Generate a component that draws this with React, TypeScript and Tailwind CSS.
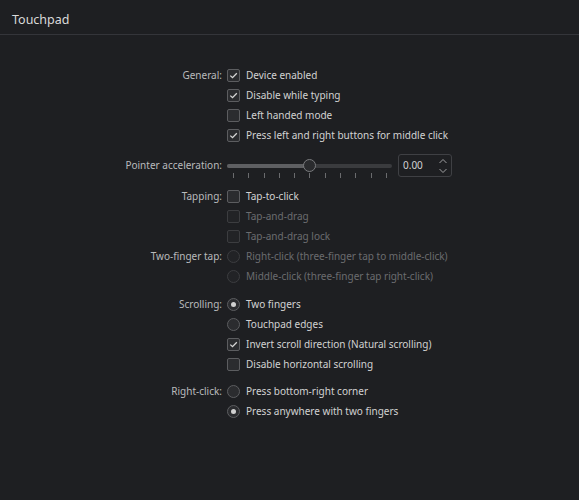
import type { ReactNode } from "react";

function Check({ checked, disabled }: { checked?: boolean; disabled?: boolean }) {
  return (
    <span
      className={`flex h-[13px] w-[13px] shrink-0 items-center justify-center rounded-[2px] border ${
        disabled ? "border-[#3c3d40] bg-[#222326]" : "border-[#5c5d60] bg-[#2b2c2f]"
      }`}
    >
      {checked && (
        <svg width="9" height="9" viewBox="0 0 9 9" fill="none" aria-hidden>
          <path d="M1.3 4.6 L3.5 6.7 L7.8 2.2" stroke="#d6d6d6" strokeWidth="1.3" />
        </svg>
      )}
    </span>
  );
}

function Radio({ checked, disabled }: { checked?: boolean; disabled?: boolean }) {
  return (
    <span
      className={`flex h-[13px] w-[13px] shrink-0 items-center justify-center rounded-full border ${
        disabled ? "border-[#3c3d40] bg-[#222326]" : "border-[#5c5d60] bg-[#2b2c2f]"
      }`}
    >
      {checked && <span className="h-[5px] w-[5px] rounded-full bg-[#d0d0d0]" />}
    </span>
  );
}

function Option({
  kind,
  checked,
  disabled,
  children,
}: {
  kind: "check" | "radio";
  checked?: boolean;
  disabled?: boolean;
  children: ReactNode;
}) {
  return (
    <div className="flex h-[20px] items-center gap-[6px]">
      {kind === "check" ? <Check checked={checked} disabled={disabled} /> : <Radio checked={checked} disabled={disabled} />}
      <span className={disabled ? "text-[#6b6c6f]" : "text-[#d2d2d2]"}>{children}</span>
    </div>
  );
}

function Row({ label, children, className = "" }: { label?: string; children: ReactNode; className?: string }) {
  return (
    <div className={`grid grid-cols-[222px_1fr] gap-x-[5px] ${className}`}>
      <div className="flex h-[20px] items-center justify-end text-[#b9babc]">{label}</div>
      <div className="flex flex-col">{children}</div>
    </div>
  );
}

function Slider() {
  const ticks = Array.from({ length: 11 });
  return (
    <div className="flex w-[165px] flex-col">
      <div className="relative h-[13px]">
        <div className="absolute left-0 right-0 top-[5px] h-[4px] rounded-full bg-[#3a3b3e]" />
        <div className="absolute left-0 top-[5px] h-[4px] w-[82px] rounded-full bg-[#5e5f62]" />
        <div className="absolute left-[76px] top-0 h-[13px] w-[13px] rounded-full border border-[#7a7b7e] bg-[#2a2b2e]" />
      </div>
      <div className="flex justify-between pl-[6px] pr-[5px] pt-[1px]">
        {ticks.map((_, i) => (
          <span key={i} className="h-[5px] w-px bg-[#6a6b6e]" />
        ))}
      </div>
    </div>
  );
}

export default function App() {
  return (
    <div className="h-[500px] w-[579px] bg-[#1e1f22] font-['Noto_Sans',sans-serif] text-[10px]">
      <div className="flex h-[35px] items-center border-b border-[#34353a] px-[12px] pt-[7px] text-[12.5px] text-[#dadada]">
        Touchpad
      </div>
      <div className="flex flex-col gap-[7px] pt-[30px]">
        <Row label="General:">
          <Option kind="check" checked>Device enabled</Option>
          <Option kind="check" checked>Disable while typing</Option>
          <Option kind="check">Left handed mode</Option>
          <Option kind="check" checked>Press left and right buttons for middle click</Option>
        </Row>
        <div className="grid grid-cols-[222px_1fr] gap-x-[5px]">
          <div className="flex h-[27px] items-center justify-end text-[#b9babc]">Pointer acceleration:</div>
          <div className="flex h-[27px] items-center gap-[6px]">
            <div className="pt-[6px]">
              <Slider />
            </div>
            <div className="flex h-[23px] w-[54px] items-center justify-between rounded-[3px] border border-[#3f4044] bg-[#1e1f22] pl-[4px] pr-[3px]">
              <span className="text-[#d2d2d2]">0.00</span>
              <svg width="10" height="18" viewBox="0 0 10 18" fill="none" aria-hidden>
                <path d="M1.5 6 L5 2.5 L8.5 6" stroke="#a0a0a2" strokeWidth="1" />
                <path d="M1.5 12 L5 15.5 L8.5 12" stroke="#a0a0a2" strokeWidth="1" />
              </svg>
            </div>
          </div>
        </div>
        <div className="flex flex-col">
          <Row label="Tapping:">
            <Option kind="check">Tap-to-click</Option>
            <Option kind="check" disabled>Tap-and-drag</Option>
            <Option kind="check" disabled>Tap-and-drag lock</Option>
          </Row>
          <Row label="Two-finger tap:">
            <Option kind="radio" disabled>Right-click (three-finger tap to middle-click)</Option>
            <Option kind="radio" disabled>Middle-click (three-finger tap right-click)</Option>
          </Row>
        </div>
        <Row label="Scrolling:" className="mt-[1px]">
          <Option kind="radio" checked>Two fingers</Option>
          <Option kind="radio">Touchpad edges</Option>
          <Option kind="check" checked>Invert scroll direction (Natural scrolling)</Option>
          <Option kind="check">Disable horizontal scrolling</Option>
        </Row>
        <Row label="Right-click:">
          <Option kind="radio">Press bottom-right corner</Option>
          <Option kind="radio" checked>Press anywhere with two fingers</Option>
        </Row>
      </div>
    </div>
  );
}
